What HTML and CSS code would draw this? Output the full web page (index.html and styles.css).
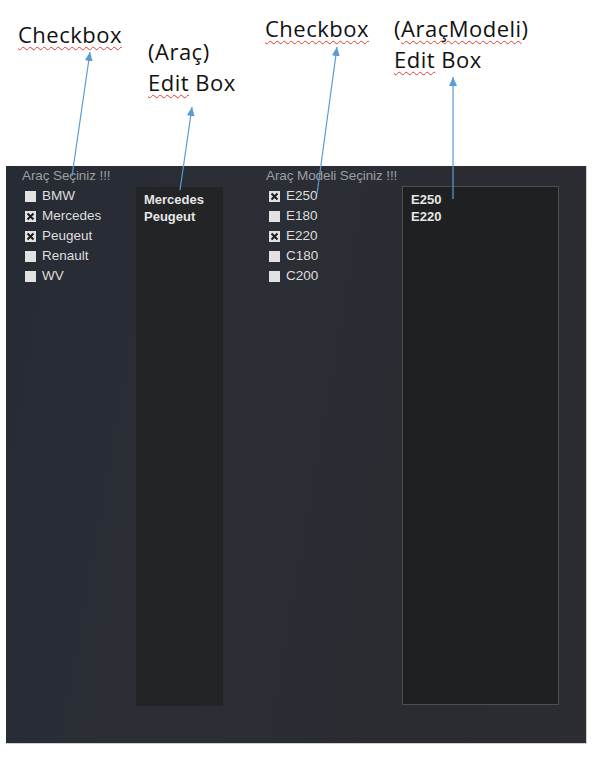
FILE: index.html
```html
<!DOCTYPE html>
<html lang="tr">
<head>
  <meta charset="UTF-8" />
  <title>Araç Seçimi</title>
  <link rel="stylesheet" href="styles.css">
</head>
<body>
  <div class="notes">
    <div class="note note-1"><span class="typo">Checkbox</span></div>
    <div class="note note-2">(Araç)<br><span class="typo">Edit</span> Box</div>
    <div class="note note-3"><span class="typo">Checkbox</span></div>
    <div class="note note-4">(<span class="typo">AraçModeli</span>)<br><span class="typo">Edit</span> Box</div>
  </div>

  <div class="panel">
    <div class="group">
      <div class="group-title">Araç Seçiniz !!!</div>
      <div class="check"><span class="box"></span>BMW</div>
      <div class="check"><span class="box"><svg viewBox="0 0 11 11"><path d="M2.5 2.5 L8.5 8.5 M8.5 2.5 L2.5 8.5"/></svg></span>Mercedes</div>
      <div class="check"><span class="box"><svg viewBox="0 0 11 11"><path d="M2.5 2.5 L8.5 8.5 M8.5 2.5 L2.5 8.5"/></svg></span>Peugeut</div>
      <div class="check"><span class="box"></span>Renault</div>
      <div class="check"><span class="box"></span>WV</div>
    </div>

    <div class="edit edit-plain">
      <div>Mercedes</div>
      <div>Peugeut</div>
    </div>

    <div class="group">
      <div class="group-title">Araç Modeli Seçiniz !!!</div>
      <div class="check"><span class="box"><svg viewBox="0 0 11 11"><path d="M2.5 2.5 L8.5 8.5 M8.5 2.5 L2.5 8.5"/></svg></span>E250</div>
      <div class="check"><span class="box"></span>E180</div>
      <div class="check"><span class="box"><svg viewBox="0 0 11 11"><path d="M2.5 2.5 L8.5 8.5 M8.5 2.5 L2.5 8.5"/></svg></span>E220</div>
      <div class="check"><span class="box"></span>C180</div>
      <div class="check"><span class="box"></span>C200</div>
    </div>

    <div class="edit edit-framed">
      <div>E250</div>
      <div>E220</div>
    </div>
  </div>

  <!-- annotation arrows drawn over the page -->
  <svg class="arrows" width="600" height="766" viewBox="0 0 600 766">
    <defs>
      <marker id="head" markerUnits="userSpaceOnUse" markerWidth="9" markerHeight="8" refX="9" refY="4" orient="auto">
        <path d="M0 0 L9 4 L0 8 z" fill="#5b9bd5"/>
      </marker>
    </defs>
    <line x1="72" y1="176" x2="90" y2="52" marker-end="url(#head)"/>
    <line x1="180" y1="190" x2="192" y2="107" marker-end="url(#head)"/>
    <line x1="317" y1="194" x2="337" y2="47" marker-end="url(#head)"/>
    <line x1="453" y1="199" x2="453" y2="77" marker-end="url(#head)"/>
  </svg>
</body>
</html>
```

FILE: styles.css
```css
body {
  margin: 0;
  background: #fff;
  position: relative;
  width: 600px;
  height: 766px;
  overflow: hidden;
}
.notes {
  height: 166px;
  display: grid;
  grid-template-columns: 130px 117px 129px auto;
  padding-left: 18px;
  font-family: 'Open Sans', sans-serif;
  font-size: 22px;
  letter-spacing: 0.5px;
  line-height: 31px;
  color: #111;
}
.note-1 { padding-top: 19px; }
.note-2 { padding-top: 36px; }
.note-3 { padding-top: 13px; }
.note-4 { padding-top: 13px; }
.typo {
  text-decoration: underline wavy #e03c32;
  text-decoration-thickness: 1px;
  text-underline-offset: 3px;
  text-decoration-skip-ink: none;
}
.panel {
  margin-left: 6px;
  width: 581px;
  height: 578px;
  box-sizing: border-box;
  padding-left: 16px;
  display: grid;
  grid-template-columns: 114px 130px 136px 157px;
  align-items: start;
  background: linear-gradient(100deg, #272b34 0%, #2b2e35 35%, #2a2c32 70%, #2b2d32 100%);
  border-right: 1px solid #cfcfcf;
  border-bottom: 1px solid #cfcfcf;
  font-family: 'Liberation Sans', Arial, sans-serif;
  font-size: 13.5px;
  line-height: 20px;
}
.group-title {
  color: #9c9ea2;
  font-size: 13.5px;
  letter-spacing: -0.1px;
  white-space: nowrap;
}
.check {
  display: flex;
  align-items: center;
  height: 20px;
  color: #dedede;
  padding-left: 3px;
}
.box {
  width: 11px;
  height: 11px;
  background: #e2e2e2;
  margin-right: 6px;
  margin-top: 1px;
}
.box svg {
  display: block;
  width: 11px;
  height: 11px;
}
.box path {
  stroke: #1c1c1c;
  stroke-width: 2;
  fill: none;
}
.edit {
  margin-top: 21px;
  box-sizing: border-box;
  color: #e6e6e6;
  font-size: 13px;
  font-weight: bold;
  line-height: 17px;
}
.edit-plain {
  width: 87px;
  height: 519px;
  padding: 4px 8px;
  background: #232426;
}
.edit-framed {
  margin-top: 20px;
  width: 157px;
  height: 519px;
  padding: 4px 8px;
  background: #1f2022;
  border: 1px solid #4d4e50;
}
.arrows {
  position: absolute;
  left: 0;
  top: 0;
  pointer-events: none;
}
.arrows line {
  stroke: #5b9bd5;
  stroke-width: 1.2;
}
```
